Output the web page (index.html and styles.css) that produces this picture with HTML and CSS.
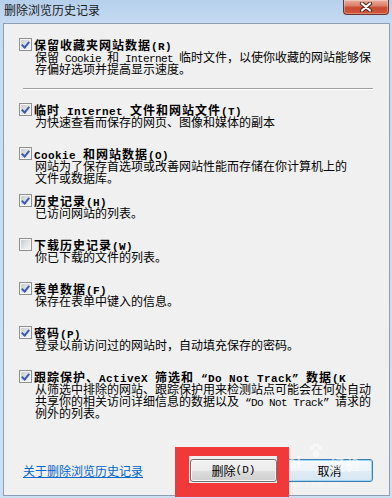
FILE: index.html
```html
<!DOCTYPE html>
<html lang="zh-CN">
<head>
<meta charset="utf-8">
<title>删除浏览历史记录</title>
<link rel="stylesheet" href="styles.css">
</head>
<body>
<div class="window">
  <div class="titlebar">
    <div class="title">删除浏览历史记录</div>
    <div class="close">
      <svg width="14" height="10" viewBox="0 0 14 10">
        <path d="M3 1.5 L11 8.5 M11 1.5 L3 8.5" stroke="#5a2a22" stroke-width="4.2" stroke-linecap="round" fill="none"/>
        <path d="M3 1.5 L11 8.5 M11 1.5 L3 8.5" stroke="#ffffff" stroke-width="2.2" stroke-linecap="round" fill="none"/>
      </svg>
    </div>
  </div>

  <div class="panel">
    <div class="opt">
      <span class="box checked"></span>
      <div class="label">保留收藏夹网站数据<span class="en">(R)</span></div>
      <div class="desc">
        <div class="line">保留<span class="en"> Cookie </span>和<span class="en"> Internet </span>临时文件，以使你收藏的网站能够保</div>
        <div class="line">存偏好选项并提高显示速度。</div>
      </div>
    </div>

    <div class="sep"></div>

    <div class="opts">
      <div class="opt">
        <span class="box checked"></span>
        <div class="label">临时<span class="en"> Internet </span>文件和网站文件<span class="en">(T)</span></div>
        <div class="desc"><div class="line">为快速查看而保存的网页、图像和媒体的副本</div></div>
      </div>
      <div class="opt opt--tight">
        <span class="box checked"></span>
        <div class="label"><span class="en">Cookie </span>和网站数据<span class="en">(O)</span></div>
        <div class="desc">
          <div class="line">网站为了保存首选项或改善网站性能而存储在你计算机上的</div>
          <div class="line">文件或数据库。</div>
        </div>
      </div>
      <div class="opt">
        <span class="box checked"></span>
        <div class="label">历史记录<span class="en">(H)</span></div>
        <div class="desc"><div class="line">已访问网站的列表。</div></div>
      </div>
      <div class="opt">
        <span class="box"></span>
        <div class="label">下载历史记录<span class="en">(W)</span></div>
        <div class="desc"><div class="line">你已下载的文件的列表。</div></div>
      </div>
      <div class="opt">
        <span class="box checked"></span>
        <div class="label">表单数据<span class="en">(F)</span></div>
        <div class="desc"><div class="line">保存在表单中键入的信息。</div></div>
      </div>
      <div class="opt">
        <span class="box checked"></span>
        <div class="label">密码<span class="en">(P)</span></div>
        <div class="desc"><div class="line">登录以前访问过的网站时，自动填充保存的密码。</div></div>
      </div>
      <div class="opt">
        <span class="box checked"></span>
        <div class="label label--clip">跟踪保护、<span class="en">ActiveX </span>筛选和<span class="en"> “Do Not Track” </span>数据<span class="en">(K)</span></div>
        <div class="desc">
          <div class="line">从筛选中排除的网站、跟踪保护用来检测站点可能会在何处自动</div>
          <div class="line">共享你的相关访问详细信息的数据以及<span class="en"> “Do Not Track” </span>请求的</div>
          <div class="line">例外的列表。</div>
        </div>
      </div>
    </div>

    <div class="footer">
      <span class="link">关于删除浏览历史记录</span>
      <button class="btn">删除<span class="en">(D)</span></button>
      <button class="btn btn--default">取消</button>
    </div>
  </div>

  <div class="mark">
    <span class="mark-bai">Bai</span>
    <svg class="mark-paw" width="14" height="15" viewBox="0 0 14 15">
      <ellipse cx="3" cy="5" rx="1.8" ry="2.2" fill="#ffffff"/>
      <ellipse cx="5.6" cy="2.2" rx="1.7" ry="2" fill="#ffffff"/>
      <ellipse cx="8.8" cy="2.2" rx="1.7" ry="2" fill="#ffffff"/>
      <ellipse cx="11.2" cy="5" rx="1.8" ry="2.2" fill="#ffffff"/>
      <path d="M7 7 C4 7 3 11 4 13 C5 14.5 9 14.5 10 13 C11 11 10 7 7 7 Z" fill="#ffffff"/>
    </svg>
    <span class="mark-jy">经验</span>
    <span class="mark-url">jingyan.baidu.com</span>
  </div>

  <div class="highlight"></div>
</div>
</body>
</html>
```
FILE: styles.css
```css
* { box-sizing: border-box; }

html, body {
  margin: 0;
  padding: 0;
}

body {
  width: 392px;
  height: 498px;
  overflow: hidden;
  font-family: "Noto Sans CJK SC", sans-serif;
  font-size: 12px;
  color: #000;
}

.window {
  position: relative;
  width: 392px;
  height: 498px;
  display: flex;
  flex-direction: column;
  background: linear-gradient(to bottom, #b5cfec 0px, #c6dbf2 23px, #cddff3 100%);
}

.titlebar {
  height: 23px;
  flex-shrink: 0;
  display: flex;
  align-items: flex-start;
}

.title {
  padding-left: 4px;
  line-height: 20px;
  color: #1a1a1a;
}

.close {
  margin-left: auto;
  margin-right: 3px;
  width: 46px;
  height: 15px;
  border: 1px solid #6e3328;
  border-top: none;
  border-radius: 0 0 4px 4px;
  background: linear-gradient(to bottom, #eab0a0 0%, #dc806a 40%, #c84a30 55%, #d0573c 100%);
  box-shadow: inset 0 0 0 1px rgba(255, 255, 255, 0.3);
  display: flex;
  align-items: center;
  justify-content: center;
}

.panel {
  flex: 1;
  margin: 0 2px 2px 3px;
  border: 1px solid #8e9fb4;
  background: #f0f0f0;
  display: flex;
  flex-direction: column;
  padding-top: 14px;
}

.opts {
  display: flex;
  flex-direction: column;
  gap: 19px;
}

.opt {
  display: grid;
  grid-template-columns: 13px auto;
  column-gap: 2px;
  padding-left: 15px;
}

.opt--tight {
  margin-bottom: -9px;
}

.box {
  grid-row: 1;
  grid-column: 1;
  width: 13px;
  height: 13px;
  border: 1px solid #8e8f8f;
  background: linear-gradient(135deg, #c4c8cd 0%, #e6e7e8 60%, #f4f4f4 100%);
  box-shadow: inset 0 0 0 1px #f6f6f6;
  position: relative;
}

.box.checked::after {
  content: "";
  position: absolute;
  left: 3px;
  top: 1px;
  width: 3px;
  height: 6px;
  border-right: 2px solid #3a5bb0;
  border-bottom: 2px solid #3a5bb0;
  transform: rotate(40deg);
}

.label {
  grid-row: 1;
  grid-column: 2;
  height: 13px;
  font-weight: bold;
  letter-spacing: 1px;
  line-height: 13px;
  white-space: nowrap;
}

.label .en {
  letter-spacing: 0.4px;
}

.label--clip {
  width: 312px;
  clip-path: inset(-6px 0 -6px -6px);
}

.desc {
  grid-column: 2;
  padding-left: 1px;
}

.line {
  height: 12px;
  line-height: 12px;
  white-space: nowrap;
}

.en {
  font-family: "Liberation Mono", monospace;
  font-size: 11px;
  letter-spacing: -0.6px;
  line-height: 11px;
}

.sep {
  margin: 13px 16px 13px 19px;
  border-top: 1px solid #a0a0a0;
  border-bottom: 1px solid #ffffff;
}

.footer {
  margin-top: auto;
  display: flex;
  align-items: center;
  gap: 9px;
  padding: 0 16px 13px 19px;
}

.link {
  margin-right: auto;
  color: #0066cc;
  text-decoration: underline;
  line-height: 13px;
}

.btn {
  width: 87px;
  height: 23px;
  padding: 0;
  border: 1px solid #707070;
  border-radius: 3px;
  background: linear-gradient(to bottom, #f2f2f2 0%, #ebebeb 50%, #dddddd 51%, #cfcfcf 100%);
  box-shadow: inset 0 0 0 1px #fbfbfb;
  font-family: "Noto Sans CJK SC", sans-serif;
  font-size: 12px;
  color: #000;
  display: flex;
  align-items: center;
  justify-content: center;
}

.btn .en {
  letter-spacing: 0;
}

.btn--default {
  border-color: #3c7fb1;
  background: linear-gradient(to bottom, #f4f9fd 0%, #ecf4fa 50%, #e0ecf5 51%, #d6e6f2 100%);
  box-shadow: inset 0 0 0 1px #9fd6f5;
}

.mark {
  position: absolute;
  left: 276px;
  top: 442px;
  width: 90px;
  height: 50px;
  opacity: 0.55;
  color: #ffffff;
  pointer-events: none;
}

.mark-bai {
  position: absolute;
  left: 0;
  top: 12px;
  font-family: "Liberation Sans", sans-serif;
  font-weight: bold;
  font-size: 16px;
  line-height: 18px;
}

.mark-paw {
  position: absolute;
  left: 33px;
  top: 1px;
}

.mark-jy {
  position: absolute;
  left: 54px;
  top: 13px;
  font-size: 15px;
  line-height: 17px;
  font-weight: bold;
}

.mark-url {
  position: absolute;
  left: 2px;
  top: 38px;
  font-family: "Liberation Sans", sans-serif;
  font-size: 8px;
  line-height: 9px;
}

.highlight {
  position: absolute;
  left: 175px;
  top: 447px;
  width: 114px;
  height: 50px;
  border-style: solid;
  border-color: #f2393a;
  border-width: 9px 12px 14px 14px;
  pointer-events: none;
}
```
